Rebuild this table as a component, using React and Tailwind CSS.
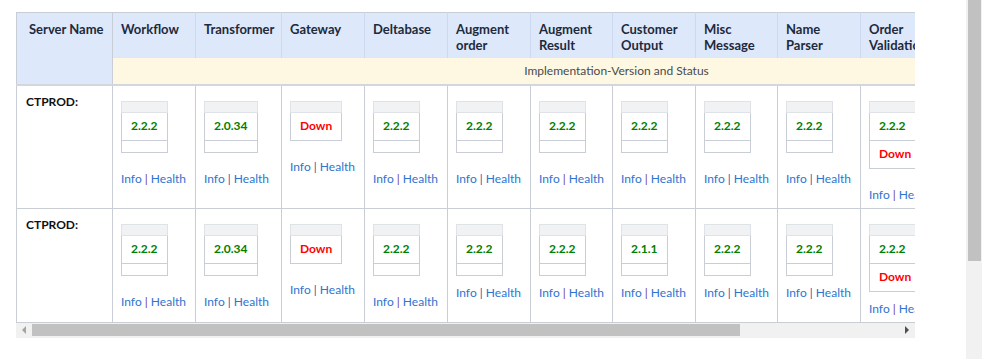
import React from 'react'

const columns = [
  { name: ['Workflow'], w: 'w-[83px]' },
  { name: ['Transformer'], w: 'w-[86px]' },
  { name: ['Gateway'], w: 'w-[83px]' },
  { name: ['Deltabase'], w: 'w-[83px]' },
  { name: ['Augment', 'order'], w: 'w-[83px]' },
  { name: ['Augment', 'Result'], w: 'w-[82px]' },
  { name: ['Customer', 'Output'], w: 'w-[83px]' },
  { name: ['Misc', 'Message'], w: 'w-[82px]' },
  { name: ['Name', 'Parser'], w: 'w-[83px]' },
  { name: ['Order', 'Validation'], w: 'w-[100px]' },
  { name: ['Product', 'Lookup'], w: 'w-[80px]' },
  { name: ['Report', 'Service'], w: 'w-[80px]' },
]

// v = version, down = service down, short = less space before links
const rows = [
  {
    server: 'CTPROD:',
    cells: [
      { v: '2.2.2' },
      { v: '2.0.34' },
      { down: true },
      { v: '2.2.2' },
      { v: '2.2.2' },
      { v: '2.2.2' },
      { v: '2.2.2' },
      { v: '2.2.2' },
      { v: '2.2.2' },
      { v: '2.2.2', down: true },
      { v: '1.4.0' },
      { v: '3.1.2' },
    ],
  },
  {
    server: 'CTPROD:',
    cells: [
      { v: '2.2.2' },
      { v: '2.0.34' },
      { down: true },
      { v: '2.2.2' },
      { v: '2.2.2', short: true },
      { v: '2.2.2', short: true },
      { v: '2.1.1', short: true },
      { v: '2.2.2', short: true },
      { v: '2.2.2', short: true },
      { v: '2.2.2', down: true, short: true },
      { v: '1.4.0', short: true },
      { v: '3.1.2', short: true },
    ],
  },
]

function StatusBox({ v, down }) {
  return (
    <table className="border-collapse border border-[#c9ced6] mt-2">
      <tbody>
        <tr>
          <td className="h-[11px] bg-[#f1f2f4] border border-[#dfe2e7] p-0"></td>
        </tr>
        {v && (
          <tr>
            <td className="h-[28px] px-[9px] font-bold text-[#008000] border border-[#c9ced6] leading-4">{v}</td>
          </tr>
        )}
        {down ? (
          <tr>
            <td className="h-[28px] px-[9px] font-bold text-[#ff0000] border border-[#c9ced6] leading-4">Down</td>
          </tr>
        ) : (
          <tr>
            <td className="h-[12px] border border-[#c9ced6] p-0"></td>
          </tr>
        )}
      </tbody>
    </table>
  )
}

function Links({ short }) {
  return (
    <div className={`${short ? 'mt-2' : 'mt-[17px]'} leading-[18px] whitespace-nowrap`}>
      <span className="text-[#2f74d0]">Info</span> <span className="text-[#6f3a94]">|</span>{' '}
      <span className="text-[#2f74d0]">Health</span>
    </div>
  )
}

export default function App() {
  return (
    <div className="flex w-[998px] h-[359px] bg-white overflow-hidden font-['Lato',sans-serif] text-[12px]">
      <div className="w-[966px] h-full pt-3 pl-4">
        <div className="w-[899px] overflow-hidden">
          <table className="table-fixed border-collapse w-[1104px] border border-[#c9ced6]">
            <colgroup>
              <col className="w-[96px]" />
              {columns.map((c, i) => (
                <col key={i} className={c.w} />
              ))}
            </colgroup>
            <thead>
              <tr className="h-[45px]">
                <th
                  rowSpan={2}
                  className="bg-[#dde8fb] text-left align-top pt-2 px-3 font-bold text-[13px] text-[#1e2a3b] leading-4 border border-[#c9ced6] whitespace-nowrap"
                >
                  Server Name
                </th>
                {columns.map((c, i) => (
                  <th
                    key={i}
                    className="bg-[#dde8fb] text-left align-top pt-2 px-2 font-bold text-[13px] text-[#1e2a3b] leading-4 border-r border-[#cdd9ee] whitespace-nowrap"
                  >
                    {c.name.map((n, j) => (
                      <div key={j}>{n}</div>
                    ))}
                  </th>
                ))}
              </tr>
              <tr className="h-[27px]">
                <th
                  colSpan={columns.length}
                  className="bg-[#fef8e3] text-center font-normal text-[#4a4a4a] border-t border-[#ece6cf]"
                >
                  Implementation-Version and Status
                </th>
              </tr>
            </thead>
            <tbody className="border-t-2 border-[#d3d6db]">
              {rows.map((r, ri) => (
                <tr key={ri}>
                  <td className="align-top pt-[7px] pb-1 px-[9px] font-bold text-[#111] border border-[#c9ced6] leading-[18px]">
                    {r.server}
                  </td>
                  {r.cells.map((c, ci) => (
                    <td key={ci} className="align-top pt-[7px] pb-1 px-2 border border-[#c9ced6]">
                      <StatusBox v={c.v} down={c.down} />
                      <Links short={c.short} />
                    </td>
                  ))}
                </tr>
              ))}
            </tbody>
          </table>
        </div>
        <div className="flex w-[899px] h-[15px] bg-[#f1f1f1] items-center">
          <div className="w-4 h-full flex items-center justify-center">
            <div className="w-0 h-0 border-y-[4px] border-y-transparent border-r-[4px] border-r-[#a3a3a3]"></div>
          </div>
          <div className="w-[708px] h-[12px] bg-[#c1c1c1]"></div>
          <div className="flex-1"></div>
          <div className="w-4 h-full flex items-center justify-center">
            <div className="w-0 h-0 border-y-[4px] border-y-transparent border-l-[4px] border-l-[#505050]"></div>
          </div>
        </div>
      </div>
      <div className="w-4 h-full bg-[#f1f1f1] flex justify-center">
        <div className="w-[13px] h-[261px] bg-[#c1c1c1]"></div>
      </div>
      <div className="flex-1"></div>
    </div>
  )
}
